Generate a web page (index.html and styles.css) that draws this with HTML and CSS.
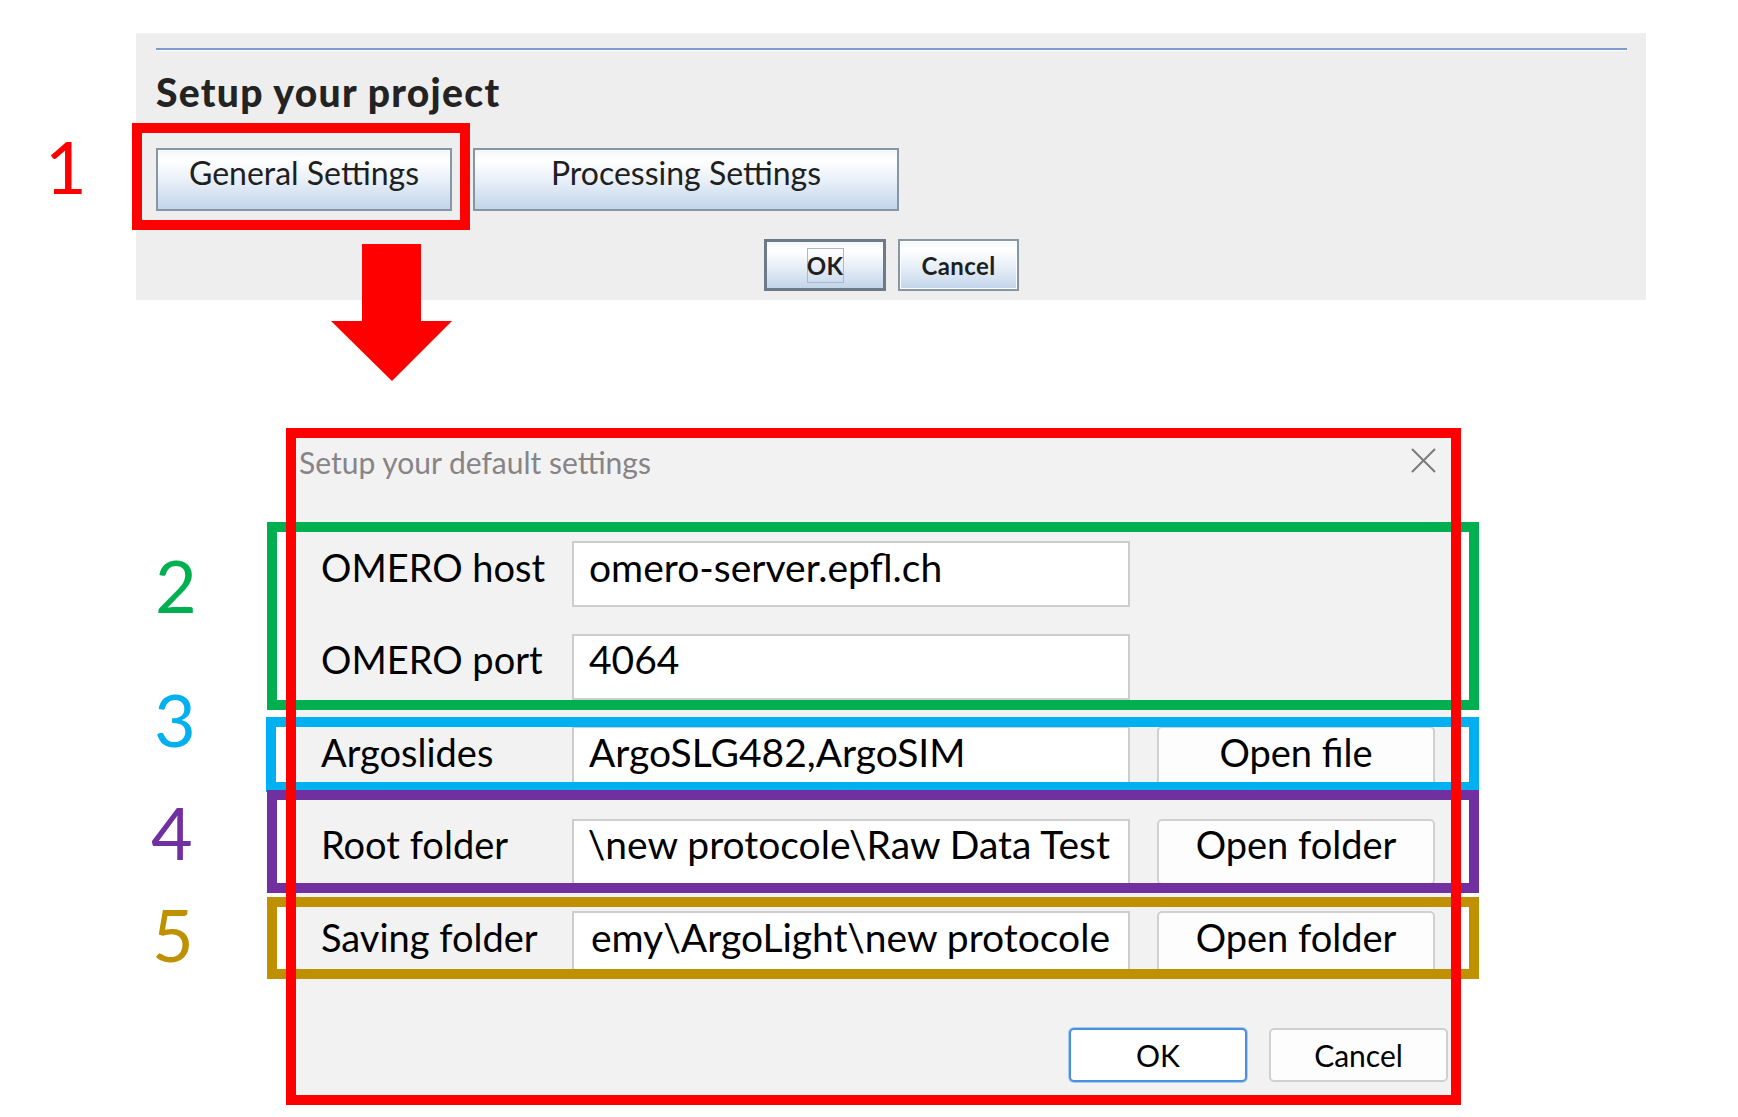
FILE: index.html
```html
<!DOCTYPE html>
<html lang="en">
<head>
<meta charset="utf-8">
<title>Setup your project</title>
<link rel="stylesheet" href="styles.css">
</head>
<body>
<div class="page">
  <section class="jpanel">
    <div class="jrule"></div>
    <h1 class="jtitle">Setup your project</h1>
    <div class="jtabs">
      <button class="jbtn jtab jtab-general">General Settings</button>
      <button class="jbtn jtab jtab-proc">Processing Settings</button>
    </div>
    <div class="jactions">
      <button class="jbtn jact jdefault"><span class="jfocus">OK</span></button>
      <button class="jbtn jact jcancel">Cancel</button>
    </div>
  </section>

  <section class="dialog">
    <header class="dlg-head">
      <span class="dlg-title">Setup your default settings</span>
      <svg class="dlg-close" width="25" height="25" viewBox="0 0 25 25" aria-label="Close">
        <path d="M1 1 L24 24 M24 1 L1 24" stroke="#7b7b7b" stroke-width="2" fill="none"/>
      </svg>
    </header>
    <div class="form">
      <span class="lbl">OMERO host</span>
      <div class="field"><div class="fclip"><span class="fv">omero-server.epfl.ch</span></div></div>
      <span class="spacer"></span>

      <span class="lbl">OMERO port</span>
      <div class="field"><div class="fclip"><span class="fv">4064</span></div></div>
      <span class="spacer"></span>

      <span class="lbl">Argoslides</span>
      <div class="field"><div class="fclip"><span class="fv">ArgoSLG482,ArgoSIM</span></div></div>
      <button class="wbtn wbtn-side">Open file</button>

      <span class="lbl">Root folder</span>
      <div class="field"><div class="fclip fclip-end"><span class="fv">C:\Users\Academy\ArgoLight\new protocole\Raw Data Test</span></div></div>
      <button class="wbtn wbtn-side">Open folder</button>

      <span class="lbl">Saving folder</span>
      <div class="field"><div class="fclip fclip-end"><span class="fv">C:\Users\Academy\ArgoLight\new protocole</span></div></div>
      <button class="wbtn wbtn-side">Open folder</button>
    </div>
    <footer class="dlg-foot">
      <button class="wbtn wbtn-foot wbtn-primary">OK</button>
      <button class="wbtn wbtn-foot">Cancel</button>
    </footer>
  </section>

  <!-- annotations -->
  <div class="anno-box box-1"></div>
  <span class="anno-num num-1">1</span>
  <svg class="anno-arrow" width="122" height="138" viewBox="0 0 122 138">
    <path d="M31 0 H90 V77 H121 L61 137 L0 77 H31 Z" fill="#ff0000"/>
  </svg>

  <div class="anno-box box-green"></div>
  <div class="anno-box box-blue"></div>
  <div class="anno-box box-purple"></div>
  <div class="anno-box box-gold"></div>
  <div class="anno-box box-red"></div>

  <span class="anno-num num-2">2</span>
  <span class="anno-num num-3">3</span>
  <span class="anno-num num-4">4</span>
  <span class="anno-num num-5">5</span>
</div>
</body>
</html>
```

FILE: styles.css
```css
* { box-sizing: border-box; }

html, body {
  margin: 0;
  padding: 0;
  background: #ffffff;
}

body {
  font-family: Lato, "Open Sans", "Noto Sans", sans-serif;
  color: #000;
}

.page {
  position: relative;
  width: 1738px;
  height: 1117px;
  padding-top: 33px;
  overflow: hidden;
}

button {
  font-family: inherit;
  margin: 0;
  padding: 0;
  cursor: default;
}

/* ---------- Java panel ---------- */
.jpanel {
  margin-left: 136px;
  width: 1510px;
  height: 267px;
  background: #eeeeee;
  padding: 15px 19px 0 20px;
  display: flex;
  flex-direction: column;
}

.jrule {
  height: 0;
  border-top: 2px solid #7f9ad0;
  border-bottom: 1px solid #ffffff;
}

.jtitle {
  margin: 21.5px 0 0 0;
  font-size: 39px;
  line-height: 38px;
  height: 38px;
  font-weight: 900;
  color: #232323;
  letter-spacing: 1.3px;
  white-space: nowrap;
}

.jtabs {
  margin-top: 37.5px;
  display: flex;
  gap: 21px;
  height: 63px;
}

.jbtn {
  border: 2px solid #8796a5;
  background: linear-gradient(to bottom, #f3f7fb 0%, #ffffff 18%, #e6eef7 55%, #c3d5ea 100%);
  color: #1f1f1f;
  display: flex;
  align-items: center;
  justify-content: center;
}

.jtab {
  height: 63px;
  font-size: 32px;
  line-height: 32px;
  padding-bottom: 13px;
}

.jtab-general { width: 296px; }
.jtab-proc { width: 426px; }

.jactions {
  margin-top: 28px;
  display: flex;
  justify-content: center;
  gap: 12px;
}

.jact {
  height: 52px;
  font-size: 24px;
  font-weight: 700;
  letter-spacing: 0.4px;
}

.jdefault {
  width: 122px;
  border: 3px solid #6d7a88;
}

.jcancel {
  width: 121px;
  box-shadow: inset 0 0 0 1px #ffffff;
}

.jfocus {
  display: flex;
  align-items: center;
  justify-content: center;
  width: 37px;
  height: 35px;
  border: 1px solid #a9bad0;
}

/* ---------- Windows dialog ---------- */
.dialog {
  margin: 138px 0 0 296px;
  width: 1155px;
  height: 657px;
  background: #f2f2f2;
  display: flex;
  flex-direction: column;
}

.dlg-head {
  height: 103px;
  display: flex;
  align-items: flex-start;
  justify-content: space-between;
  padding: 9px 15px 0 3px;
}

.dlg-title {
  font-size: 30px;
  line-height: 30px;
  color: #878487;
}

.dlg-close {
  margin-top: 1px;
  display: block;
}

.form {
  display: grid;
  grid-template-columns: 224px 558px 278px;
  column-gap: 27px;
  grid-auto-rows: 66px;
  row-gap: 26.5px;
  padding-left: 25px;
  align-items: stretch;
}

.lbl {
  font-size: 38px;
  line-height: 38px;
  display: flex;
  align-items: center;
  padding-bottom: 15px;
  white-space: nowrap;
}

.field {
  background: #ffffff;
  border: 2px solid #cdcdcd;
  padding: 0 18px 15px 15px;
  display: flex;
  align-items: center;
  font-size: 39px;
  line-height: 38px;
  white-space: nowrap;
  min-width: 0;
}

.fclip {
  flex: 1;
  min-width: 0;
  overflow: hidden;
  display: flex;
  justify-content: flex-start;
  padding: 4px 0;
}

.fclip-end {
  justify-content: flex-end;
}

.fv {
  flex: none;
  white-space: nowrap;
}

.wbtn {
  background: #fdfdfd;
  border: 2px solid #d0d0d0;
  border-radius: 5px;
  color: #000;
  display: flex;
  align-items: center;
  justify-content: center;
}

.wbtn-side {
  font-size: 38px;
  line-height: 38px;
  padding-bottom: 15px;
}

.dlg-foot {
  margin-top: 51px;
  display: flex;
  justify-content: flex-end;
  gap: 22px;
  padding-right: 3px;
}

.wbtn-foot {
  width: 178px;
  height: 54px;
  font-size: 30px;
  line-height: 30px;
  padding-bottom: 0;
}

.wbtn-foot + .wbtn-foot { width: 179px; }

.wbtn-primary {
  border: 2px solid #4a90e0;
  box-shadow: 0 0 0 1px #a9cbf0;
  background: #ffffff;
}

/* ---------- Annotations ---------- */
.anno-box {
  position: absolute;
  border: 10px solid transparent;
  pointer-events: none;
}

.box-1 { left: 132px; top: 123px; width: 338px; height: 107px; border-color: #ff0000; }
.box-green { left: 267px; top: 522px; width: 1212px; height: 188px; border-color: #00b050; }
.box-blue { left: 266px; top: 717px; width: 1213px; height: 75px; border-color: #00b0f0; }
.box-purple { left: 267px; top: 790px; width: 1212px; height: 103px; border-color: #7030a0; }
.box-gold { left: 267px; top: 897px; width: 1212px; height: 82px; border-color: #bf9000; }
.box-red { left: 286px; top: 428px; width: 1175px; height: 677px; border-color: #ff0000; }

.anno-arrow {
  position: absolute;
  left: 331px;
  top: 244px;
}

.anno-num {
  position: absolute;
  width: 60px;
  text-align: center;
  font-size: 72px;
  line-height: 72px;
  font-weight: 400;
}

.num-1 { left: 36px; top: 130px; color: #ff0000; }
.num-2 { left: 146px; top: 549px; color: #00b050; }
.num-3 { left: 145px; top: 683px; color: #00b0f0; }
.num-4 { left: 142px; top: 796px; color: #7030a0; }
.num-5 { left: 143px; top: 898px; color: #bf9000; }
```
